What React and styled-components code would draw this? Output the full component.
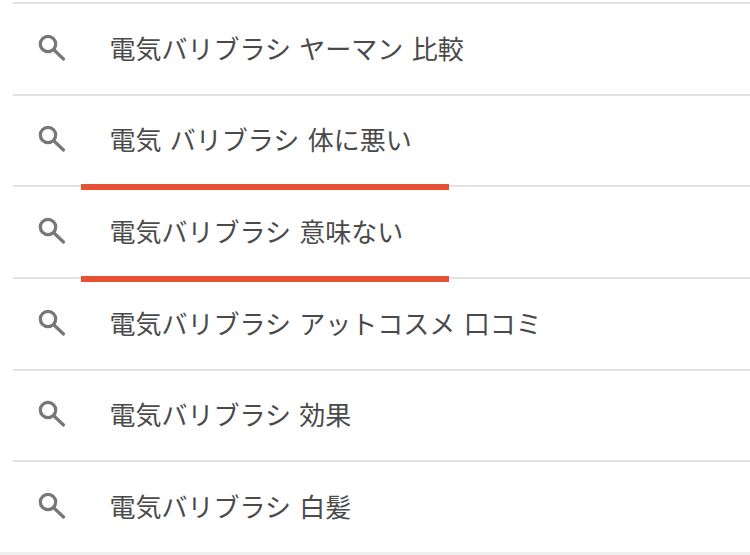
import React from "react";
import styled, { createGlobalStyle } from "styled-components";

const Global = createGlobalStyle`
  html, body { margin: 0; padding: 0; background: #fff; }
  body { width: 750px; height: 555px; overflow: hidden; }
`;

const List = styled.ul`
  list-style: none;
  margin: 0;
  padding: 2px 0 0 13px;
  display: flex;
  flex-direction: column;
  width: 750px;
  height: 555px;
  box-sizing: border-box;
  border-bottom: 3px solid #eeeeee;
`;

const Row = styled.li`
  position: relative;
  flex: 0 0 91.67px;
  box-sizing: border-box;
  border-top: 2px solid #e2e2e2;
  display: flex;
  align-items: center;
  padding: 0 0 2px 24px;
`;

const SearchIcon = styled.svg`
  width: 30px;
  height: 30px;
  flex: none;
  color: #777777;
`;

const Label = styled.span`
  margin-left: 42.5px;
  font-family: "Noto Sans CJK JP", "Noto Sans", sans-serif;
  font-size: 26px;
  line-height: 36px;
  color: #4a4a4a;
  white-space: nowrap;
  word-spacing: 2.5px;
`;

const Underline = styled.span`
  position: absolute;
  z-index: 1;
  left: 68px;
  width: 368px;
  bottom: -5px;
  height: 6px;
  background: #e65233;
`;

const rows = [
  { text: "電気バリブラシ ヤーマン 比較" },
  { text: "電気 バリブラシ 体に悪い", marked: true },
  { text: "電気バリブラシ 意味ない", marked: true },
  { text: "電気バリブラシ アットコスメ 口コミ" },
  { text: "電気バリブラシ 効果" },
  { text: "電気バリブラシ 白髪" },
];

export default function App() {
  return (
    <>
      <Global />
      <List>
        {rows.map((r) => (
          <Row key={r.text}>
            <SearchIcon viewBox="0 0 30 30" fill="none" stroke="currentColor" strokeWidth="3.2">
              <circle cx="11" cy="11" r="7.7" />
              <path d="M17 17 L26.5 26" strokeLinecap="round" />
            </SearchIcon>
            <Label>{r.text}</Label>
            {r.marked && <Underline />}
          </Row>
        ))}
      </List>
    </>
  );
}
